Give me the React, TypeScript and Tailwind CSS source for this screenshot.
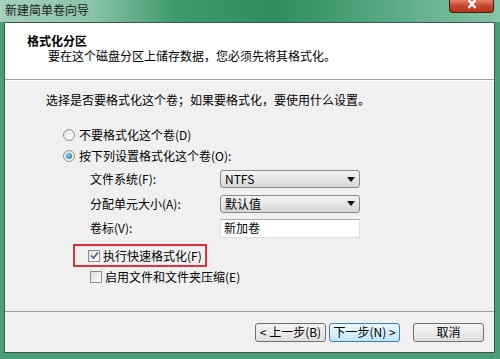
const FONT = "font-['Noto_Sans_CJK_SC',sans-serif]";

function Radio({ checked }: { checked?: boolean }) {
  return (
    <span className="w-[12px] h-[12px] rounded-full border border-[#8f8f8f] bg-[linear-gradient(135deg,#e2e2e2,#ffffff)] flex items-center justify-center shrink-0">
      {checked && (
        <span className="w-[6px] h-[6px] rounded-full bg-[radial-gradient(circle_at_35%_35%,#7fd0f5,#1d5d9b)]" />
      )}
    </span>
  );
}

function Check({ checked }: { checked?: boolean }) {
  return (
    <span className="w-[12px] h-[12px] border border-[#8f8f8f] bg-[linear-gradient(135deg,#dcdcdc,#ffffff)] flex items-center justify-center shrink-0">
      {checked && (
        <svg width="9" height="9" viewBox="0 0 9 9">
          <path d="M1 4.5 L3.5 7 L8 1.5" stroke="#4a5e8a" strokeWidth="1.6" fill="none" />
        </svg>
      )}
    </span>
  );
}

function Select({ value }: { value: string }) {
  return (
    <div className="w-[140px] h-[18px] border border-[#8a8a8a] rounded-[3px] bg-[linear-gradient(#f4f4f4,#e6e6e6_50%,#d6d6d6)] flex items-center justify-between px-[4px]">
      <span className="text-[12px] leading-none text-black">{value}</span>
      <svg width="8" height="5" viewBox="0 0 8 5">
        <path d="M0 0 H8 L4 5 Z" fill="#111" />
      </svg>
    </div>
  );
}

function Btn({ label, primary }: { label: string; primary?: boolean }) {
  return (
    <div
      className={
        "w-[71px] h-[19px] rounded-[3px] border flex items-center justify-center text-[12px] leading-none text-black " +
        (primary
          ? "border-[#3c7fb1] bg-[linear-gradient(#eaf6fd,#d9f0fc_50%,#bee6fd)]"
          : "border-[#707070] bg-[linear-gradient(#f2f2f2,#ebebeb_50%,#dddddd)]")
      }
    >
      {label}
    </div>
  );
}

export default function App() {
  return (
    <div className={`w-[500px] h-[359px] bg-[#4a9f78] flex flex-col ${FONT}`}>
      <div className="h-[22px] shrink-0 flex items-start justify-between bg-[linear-gradient(90deg,#a4cfb9_0%,#8cc4a8_18%,#3f9a6c_35%,#2f8c5e_55%,#52a67d_75%,#86c5a5_100%)]">
        <span className="text-[12px] text-[#1a1a1a] pl-[5px] pt-[3px] leading-[14px]">新建简单卷向导</span>
        <div className="mr-[6px] w-[45px] h-[13px] rounded-b-[4px] border border-t-0 border-[#4a1e16] bg-[linear-gradient(#e9826c,#c6452c_50%,#b83018)] flex items-start justify-center">
          <svg width="10" height="9" viewBox="0 0 10 9">
            <path d="M1.5 0 L8.5 8 M8.5 0 L1.5 8" stroke="#ffffff" strokeWidth="2.4" />
          </svg>
        </div>
      </div>
      <div className="mx-[4px] mr-[5px] mb-[6px] flex-1 flex flex-col border border-[#3b5a4c] bg-[#f0f0f0]">
        <div className="h-[57px] bg-white border-b border-[#a0a0a0] pl-[22px] pt-[11px]">
          <div className="text-[12px] font-bold leading-[14px] text-black">格式化分区</div>
          <div className="text-[12px] leading-[14px] text-black pl-[21px] mt-[1px]">要在这个磁盘分区上储存数据，您必须先将其格式化。</div>
        </div>
        <div className="flex-1 border-t border-white flex flex-col pl-[41px] pt-[11px] text-[12px] text-black">
          <div className="h-[16px] leading-[16px]">选择是否要格式化这个卷；如果要格式化，要使用什么设置。</div>
          <div className="flex flex-col pl-[17px] mt-[17px]">
            <div className="h-[20px] flex items-center gap-[4px]">
              <Radio />
              <span>不要格式化这个卷(D)</span>
            </div>
            <div className="h-[22px] flex items-center gap-[4px]">
              <Radio checked />
              <span>按下列设置格式化这个卷(O):</span>
            </div>
            <div className="pl-[27px] flex flex-col">
              <div className="h-[24px] flex items-center">
                <span className="w-[130px]">文件系统(F):</span>
                <Select value="NTFS" />
              </div>
              <div className="h-[25px] flex items-center">
                <span className="w-[130px]">分配单元大小(A):</span>
                <Select value="默认值" />
              </div>
              <div className="h-[24px] flex items-center">
                <span className="w-[130px]">卷标(V):</span>
                <div className="w-[140px] h-[19px] bg-white border border-[#dbdfe6] border-t-[#abadb3] flex items-center px-[3px]">新加卷</div>
              </div>
              <div className="mt-[4px] -ml-[17px] w-[134px] h-[23px] border-2 border-[#e0303a] flex items-center pl-[13px] gap-[3px]">
                <Check checked />
                <span>执行快速格式化(F)</span>
              </div>
              <div className="h-[20px] flex items-center gap-[3px]">
                <Check />
                <span>启用文件和文件夹压缩(E)</span>
              </div>
            </div>
          </div>
        </div>
        <div className="h-[41px] border-t border-[#a0a0a0] flex items-center justify-end pr-[10px]">
          <div className="flex items-center gap-[3px]">
            <Btn label="< 上一步(B)" />
            <Btn label="下一步(N) >" primary />
          </div>
          <div className="ml-[13px]">
            <Btn label="取消" />
          </div>
        </div>
      </div>
    </div>
  );
}
